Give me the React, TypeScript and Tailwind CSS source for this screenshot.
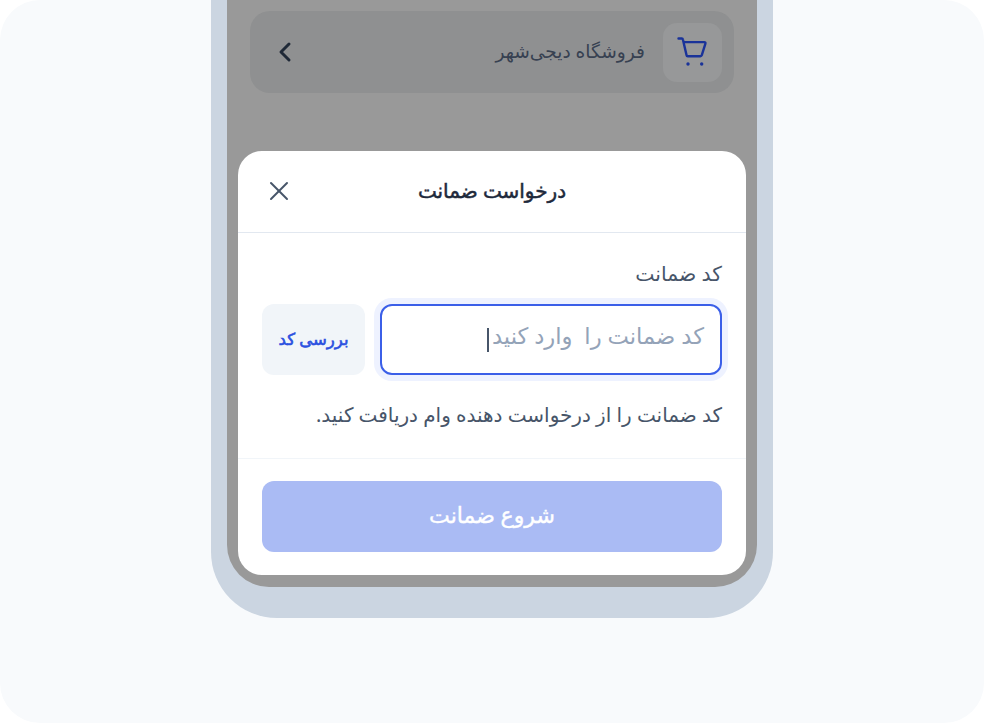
import { ChevronLeft, X } from "lucide-react";

const fa = { fontFamily: '"Noto Sans", "DejaVu Sans", sans-serif' };

const App = () => {
  return (
    <div dir="rtl" style={fa} className="w-[984px] h-[723px] bg-white overflow-hidden">
      <div className="h-full bg-[#f8fafc] rounded-[40px] flex justify-center">
        {/* phone frame */}
        <div className="w-[562px] h-[618px] bg-[#cbd5e1] rounded-b-[66px] px-[16px] pb-[31px]">
          <div className="h-full bg-[#999999] rounded-b-[42px] px-[11px] pb-[12px] flex flex-col">
            {/* store header, dimmed by the overlay */}
            <div className="mt-[11px] mx-[12px] h-[82px] bg-[#8f9091] rounded-[20px] flex items-center pr-[12px] pl-[19px]">
              <div className="w-[59px] h-[59px] rounded-[14px] bg-[#979899] flex items-center justify-center">
                <svg viewBox="0 0 32 32" className="w-8 h-8 text-[#1a3399]" fill="none" stroke="currentColor" strokeWidth="2.4" strokeLinecap="round" strokeLinejoin="round">
                  <path d="M1.5 2.5h3.3c.6 0 1 .4 1.1 1L9.5 19c.1.7.6 1.2 1.3 1.2h12.6c.7 0 1.2-.4 1.4-1l3.6-11.5c.3-1-.2-1.6-1.2-1.6L6.5 6" />
                  <circle cx="11" cy="28" r="1.7" fill="currentColor" stroke="none" />
                  <circle cx="24.7" cy="28" r="1.7" fill="currentColor" stroke="none" />
                </svg>
              </div>
              <span className="mr-[18px] -mt-[2px] text-[18.6px] text-[#374151]">فروشگاه دیجی‌شهر</span>
              <ChevronLeft className="mr-auto w-8 h-8 text-[#1f2937]" strokeWidth={2.25} />
            </div>

            {/* bottom sheet */}
            <div className="mt-auto h-[424px] bg-white rounded-t-[24px] rounded-b-[24px] flex flex-col">
              <div className="relative h-[82px] shrink-0 border-b border-[#e2e8f0] flex items-center justify-center">
                <h2 className="pb-[2px] text-[20px] font-normal text-[#1e293b] [-webkit-text-stroke:0.5px_#1e293b]">درخواست ضمانت</h2>
                <X className="absolute left-[25px] top-[24px] w-8 h-8 text-[#475569]" strokeWidth={1.5} />
              </div>

              <div className="flex-1 px-[24px] pt-[26px]">
                <label className="block text-[20.4px] leading-[28px] text-[#475569]">کد ضمانت</label>
                <div className="mt-[17px] flex gap-[15px] items-center">
                  <div className="flex-1 h-[71px] rounded-[12px] bg-white border-2 border-[#3b5fe8] shadow-[0_0_0_6px_#eef2ff] flex items-center px-[16px] pb-[6px] text-[22.7px] text-[#94a3b8]">
                    <span className="whitespace-pre">کد ضمانت را  وارد کنید</span>
                    <span className="w-[2px] h-[24px] mt-[6px] mr-[3px] bg-[#475569]" />
                  </div>
                  <button className="w-[103px] h-[71px] rounded-[12px] bg-[#f1f5f9] text-[16.5px] font-normal text-[#2b50e0] [-webkit-text-stroke:0.6px_#2b50e0]">
                    بررسی کد
                  </button>
                </div>
                <p className="mt-[26px] text-[20px] leading-[28px] text-[#475569]">
                  کد ضمانت را از درخواست دهنده وام دریافت کنید.
                </p>
              </div>

              <div className="shrink-0 h-[117px] border-t border-[#f1f5f9] px-[24px] pt-[22px]">
                <button className="w-full h-[71px] pb-[4px] rounded-[12px] bg-[#aabbf4] text-[22px] font-medium text-white [-webkit-text-stroke:0.4px_white]">
                  شروع ضمانت
                </button>
              </div>
            </div>
          </div>
        </div>
      </div>
    </div>
  );
};

export default App;
